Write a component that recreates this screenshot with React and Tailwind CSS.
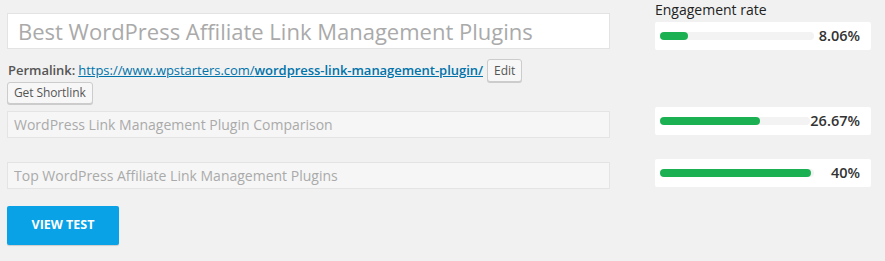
import React from 'react';

const rates = [
  { value: '8.06%', fill: 28, mt: 'mt-[4px]' },
  { value: '26.67%', fill: 100, mt: 'mt-[57px]' },
  { value: '40%', fill: 151, mt: 'mt-[24px]' },
];

const RateBox = ({ value, fill, mt }) => (
  <div className={`${mt} h-[28px] w-[216px] bg-white rounded-[2px] flex items-center pl-[5px] pr-[11px]`}>
    <div className="w-[154px] h-[8px] bg-[#f3f3f3] rounded-full">
      <div className="h-full bg-[#1bb153] rounded-full" style={{ width: fill }} />
    </div>
    <span className="ml-auto text-[14.5px] text-[#333] font-semibold">{value}</span>
  </div>
);

const App = () => {
  return (
    <div className="w-[885px] h-[261px] bg-[#f1f1f1] flex font-['Open_Sans',sans-serif] overflow-hidden">
      <div className="w-[603px] ml-[7px] pt-[13px] flex flex-col items-start">
        <div className="w-full h-[36px] bg-white border border-[#e3e3e3] flex items-center pl-[10px] text-[22px] text-[#aaa]">
          Best WordPress Affiliate Link Management Plugins
        </div>

        <div className="mt-[10px] flex items-center text-[13px] text-[#555] pl-[1px] tracking-[-0.03px]">
          <span className="font-semibold">Permalink:</span>
          <a className="ml-[3px] text-[#0073aa] underline" href="#">
            https://www.wpstarters.com/<span className="font-semibold">wordpress-link-management-plugin/</span>
          </a>
          <span className="ml-[4px] h-[23px] px-[6px] flex items-center bg-[#f7f7f7] border border-[#ccc] rounded-[3px] text-[12px] text-[#555] tracking-normal shadow-[0_1px_0_#ccc]">
            Edit
          </span>
        </div>

        <span className="h-[22px] px-[6px] flex items-center bg-[#f7f7f7] border border-[#ccc] rounded-[3px] text-[12px] text-[#555] tracking-[-0.1px] shadow-[0_1px_0_#ccc]">
          Get Shortlink
        </span>

        <div className="mt-[7px] w-full h-[27px] bg-[#f6f6f6] border border-[#e4e4e4] flex items-center pl-[6px] text-[14px] text-[#aaa]">
          WordPress Link Management Plugin Comparison
        </div>

        <div className="mt-[24px] w-full h-[27px] bg-[#f6f6f6] border border-[#e4e4e4] flex items-center pl-[6px] text-[14px] text-[#aaa]">
          Top WordPress Affiliate Link Management Plugins
        </div>

        <button className="mt-[17px] w-[112px] h-[39px] bg-[#0aa2e7] rounded-[2px] text-white text-[12.5px] font-bold shadow-[0_1px_1px_rgba(0,0,0,0.15)]">
          VIEW TEST
        </button>
      </div>

      <div className="ml-[45px] flex flex-col">
        <div className="h-[18px] leading-[19px] text-[14px] text-[#222]">Engagement rate</div>
        {rates.map((r) => (
          <RateBox key={r.value} {...r} />
        ))}
      </div>
    </div>
  );
};

export default App;
